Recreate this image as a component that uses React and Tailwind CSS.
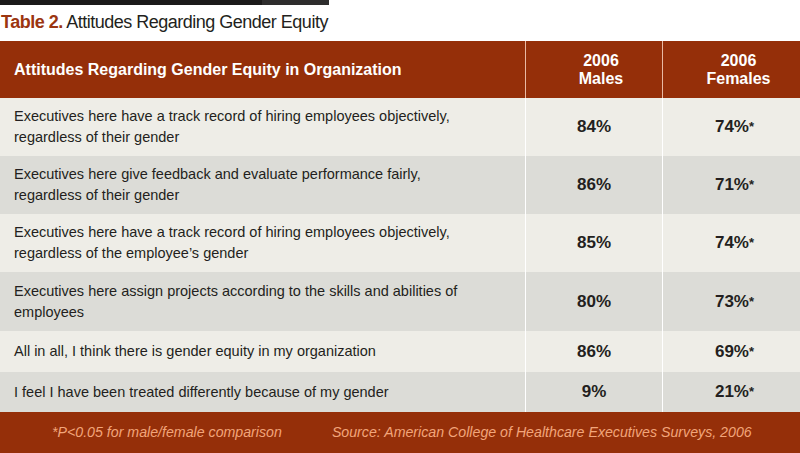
import React from "react";

const rows = [
  {
    text: ["Executives here have a track record of hiring employees objectively,", "regardless of their gender"],
    males: "84%",
    females: "74%",
    h: "h-[58px]",
    bg: "bg-[#eeede7]",
  },
  {
    text: ["Executives here give feedback and evaluate performance fairly,", "regardless of their gender"],
    males: "86%",
    females: "71%",
    h: "h-[58px]",
    bg: "bg-[#dcdcd7]",
  },
  {
    text: ["Executives here have a track record of hiring employees objectively,", "regardless of the employee’s gender"],
    males: "85%",
    females: "74%",
    h: "h-[58px]",
    bg: "bg-[#eeede7]",
  },
  {
    text: ["Executives here assign projects according to the skills and abilities of", "employees"],
    males: "80%",
    females: "73%",
    h: "h-[59px]",
    bg: "bg-[#dcdcd7]",
  },
  {
    text: ["All in all, I think there is gender equity in my organization"],
    males: "86%",
    females: "69%",
    h: "h-[41px]",
    bg: "bg-[#eeede7]",
  },
  {
    text: ["I feel I have been treated differently because of my gender"],
    males: "9%",
    females: "21%",
    h: "h-[40px]",
    bg: "bg-[#dcdcd7]",
  },
];

const App = () => {
  return (
    <div className="w-[800px] h-[453px] bg-white overflow-hidden font-['Liberation_Sans',Arial,sans-serif]">
      {/* top rule */}
      <div className="flex h-[5px] w-[329px]">
        <div className="flex-1 bg-[#1b1a1a]" />
        <div className="w-[67px] bg-[#2e2d2d]" />
      </div>

      {/* caption */}
      <div className="h-[36px] pl-[1px] pt-[6px] text-[18px] leading-[22px] tracking-[-0.5px] text-[#231f20]">
        <span className="font-bold text-[#9b3510]">Table 2.</span> Attitudes Regarding Gender Equity
      </div>

      {/* header */}
      <div className="grid grid-cols-[525px_136px_1fr] gap-x-[1px] bg-[#e9b9a3] h-[57px]">
        <div className="bg-[#952f09] flex items-center pl-[14px] text-white font-bold text-[16px]">
          Attitudes Regarding Gender Equity in Organization
        </div>
        <div className="bg-[#952f09] flex flex-col items-center justify-center pl-[14px] text-white font-bold text-[16px] leading-[18px]">
          <span>2006</span>
          <span>Males</span>
        </div>
        <div className="bg-[#952f09] flex flex-col items-center justify-center pl-[14px] text-white font-bold text-[16px] leading-[18px]">
          <span>2006</span>
          <span>Females</span>
        </div>
      </div>

      {/* body */}
      {rows.map((r, i) => (
        <div key={i} className={`grid grid-cols-[525px_136px_1fr] gap-x-[1px] bg-white ${r.h}`}>
          <div className={`${r.bg} flex flex-col justify-center pl-[14px] text-[14.5px] leading-[21px] text-[#231f20]`}>
            {r.text.map((t, j) => (
              <span key={j}>{t}</span>
            ))}
          </div>
          <div className={`${r.bg} flex items-center justify-center font-bold text-[17px] text-[#231f20]`}>
            {r.males}
          </div>
          <div className={`${r.bg} flex items-center justify-center pl-[6px] font-bold text-[17px] text-[#231f20]`}>
            <span>
              {r.females}
              <sup className="text-[13px] relative -top-[1px]">*</sup>
            </span>
          </div>
        </div>
      ))}

      {/* footer */}
      <div className="h-[41px] bg-[#952f09] flex items-center text-[14.2px] italic text-[#f2a57a]">
        <span className="pl-[52px]">*P&lt;0.05 for male/female comparison</span>
        <span className="pl-[50px]">Source: American College of Healthcare Executives Surveys, 2006</span>
      </div>
    </div>
  );
};

export default App;
